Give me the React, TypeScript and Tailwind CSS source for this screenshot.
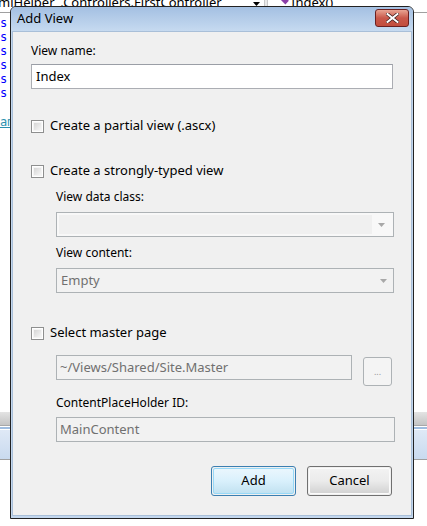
import React from "react";

const font = { fontFamily: '"Noto Sans", "Open Sans", sans-serif' };

function Checkbox() {
  return (
    <div className="w-[13px] h-[13px] border border-[#8e8f8f] bg-white p-[1px] shrink-0">
      <div className="w-full h-full bg-gradient-to-br from-[#d6d6d6] to-[#f6f6f6] border border-[#f4f4f4]" />
    </div>
  );
}

function Arrow() {
  return (
    <svg width="7" height="4" viewBox="0 0 7 4">
      <path d="M0 0 L7 0 L3.5 4 Z" fill="#a8a8a8" />
    </svg>
  );
}

export default function App() {
  return (
    <div className="relative w-[427px] h-[526px] bg-white overflow-hidden text-[12px] text-black" style={font}>
      {/* background editor: top strip */}
      <div className="absolute left-0 top-0 w-[427px] h-[13px] bg-white border-b border-[#a0a0a0] overflow-hidden">
        <div className="absolute left-[-2px] top-[-6px] text-[13px] leading-[16px] text-black whitespace-nowrap">mlHelper_.Controllers.FirstController</div>
        <div className="absolute left-[253px] top-[2px]">
          <svg width="7" height="4" viewBox="0 0 7 4"><path d="M0 0 L7 0 L3.5 4 Z" fill="#000" /></svg>
        </div>
        <div className="absolute left-[264px] top-0 w-[4px] h-[13px] bg-[#e8e8e8] border-x border-[#c8c8c8]" />
        <div className="absolute left-[282px] top-[-2px] w-[6px] h-[5px] bg-[#8b3fa8] rotate-45" />
        <div className="absolute left-[291px] top-[-6px] text-[13px] leading-[16px] whitespace-nowrap">Index()</div>
      </div>
      {/* left code lines */}
      <div className="absolute left-0 top-[16px] w-[10px] overflow-hidden text-[#0000ff] text-[12px] leading-[14px] whitespace-nowrap" style={{ fontFamily: '"DejaVu Sans Mono", monospace' }}>
        <div>s i</div>
        <div>s i</div>
        <div>s i</div>
        <div>s i</div>
        <div>s i</div>
        <div>s i</div>
        <div className="mt-[15px] text-[#2b91af] underline">am</div>
      </div>
      {/* bottom toolbar background */}
      <div className="absolute left-0 top-[412px] w-[427px] h-[14px] bg-gradient-to-b from-[#e4e4e4] to-[#c4c4c4] border-b border-[#a8a8a8]" />
      <div className="absolute left-0 top-[427px] w-[427px] h-[2px] bg-[#9fbde0]" />
      <div className="absolute left-0 top-[430px] w-[427px] h-[30px] bg-gradient-to-b from-[#dfe9f6] to-[#c9daef] border-b border-[#a0a0a0]" />

      {/* dialog window */}
      <div className="absolute left-[10px] top-[6px] w-[404px] h-[513px] border border-[#222] rounded-t-[6px] bg-[#c3d7ee] flex flex-col">
        <div className="h-[24px] shrink-0 flex items-center justify-between pl-[6px] pr-[4px] rounded-t-[5px] bg-gradient-to-b from-[#a4c0e2] to-[#c6daf0]">
          <span className="text-[13px] text-black">Add View</span>
          <div className="w-[34px] h-[18px] mt-[-2px] rounded-[3px] border border-[#6b2020] bg-gradient-to-b from-[#e8a493] via-[#c9584a] to-[#c24d3d] flex items-center justify-center">
            <svg width="13" height="10" viewBox="0 0 13 10">
              <path d="M1.5 1 L11.5 9 M11.5 1 L1.5 9" stroke="#3a1a1a" strokeWidth="3.4" strokeLinecap="square" />
              <path d="M1.5 1 L11.5 9 M11.5 1 L1.5 9" stroke="#fff" strokeWidth="2" strokeLinecap="square" />
            </svg>
          </div>
        </div>
        <div className="flex-1 mx-[1px] mb-[2px] bg-[#f0f0f0] border border-[#a9bfd8] flex flex-col pl-[18px] pr-[19px]">
          <div className="mt-[11px] leading-[16px]">View name:</div>
          <div className="mt-[5px] h-[25px] w-[362px] border border-[#abadb3] border-t-[#9a9ea6] bg-white flex items-center pl-[4px] text-[13px]">Index</div>

          <div className="mt-[30px] flex items-center gap-[6px] h-[14px]">
            <Checkbox />
            <span className="text-[13px]">Create a partial view (.ascx)</span>
          </div>

          <div className="mt-[31px] flex items-center gap-[6px] h-[14px]">
            <Checkbox />
            <span className="text-[13px]">Create a strongly-typed view</span>
          </div>

          <div className="pl-[25px] flex flex-col">
            <div className="mt-[11px] leading-[16px]">View data class:</div>
            <div className="mt-[7px] h-[25px] w-[338px] border border-[#adb2b5] bg-[#f8f8f8] flex items-center p-[2px]">
              <div className="flex-1 h-full bg-[#f0f0f0]" />
              <div className="w-[19px] flex justify-center"><Arrow /></div>
            </div>
            <div className="mt-[8px] leading-[16px]">View content:</div>
            <div className="mt-[7px] h-[25px] w-[338px] border border-[#adb2b5] bg-[#f2f2f2] flex items-center pl-[4px] text-[13px] text-[#707070]">
              <span className="flex-1">Empty</span>
              <div className="w-[19px] flex justify-center"><Arrow /></div>
            </div>
          </div>

          <div className="mt-[33px] flex items-center gap-[6px] h-[14px]">
            <Checkbox />
            <span className="text-[13px]">Select master page</span>
          </div>

          <div className="pl-[25px] flex flex-col">
            <div className="mt-[15px] flex items-start gap-[11px]">
              <div className="h-[25px] w-[298px] border border-[#adb2b5] bg-[#f2f2f2] flex items-center pl-[3px] text-[13px] text-[#707070]">~/Views/Shared/Site.Master</div>
              <div className="mt-[2px] h-[29px] w-[29px] border border-[#adb2b5] rounded-[3px] bg-[#f4f4f4] flex items-center justify-center text-[9px] text-[#9a9a9a] leading-none">...</div>
            </div>
            <div className="mt-[9px] leading-[16px]">ContentPlaceHolder ID:</div>
            <div className="mt-[6px] h-[25px] w-[339px] border border-[#adb2b5] bg-[#f2f2f2] flex items-center pl-[3px] text-[13px] text-[#707070]">MainContent</div>
          </div>

          <div className="mt-[24px] flex justify-end gap-[11px]">
            <div className="w-[85px] h-[30px] rounded-[3px] border border-[#3c7fb1] p-[1px]">
              <div className="w-full h-full rounded-[2px] border border-[#97d9f8] bg-gradient-to-b from-[#eaf6fd] via-[#d9f0fc] to-[#c2e2f1] flex items-center justify-center text-[13px]">Add</div>
            </div>
            <div className="w-[85px] h-[30px] rounded-[3px] border border-[#707070] p-[1px]">
              <div className="w-full h-full rounded-[2px] border border-[#fbfbfb] bg-gradient-to-b from-[#f2f2f2] via-[#ebebeb] to-[#d3d3d3] flex items-center justify-center text-[13px]">Cancel</div>
            </div>
          </div>
        </div>
      </div>
    </div>
  );
}
